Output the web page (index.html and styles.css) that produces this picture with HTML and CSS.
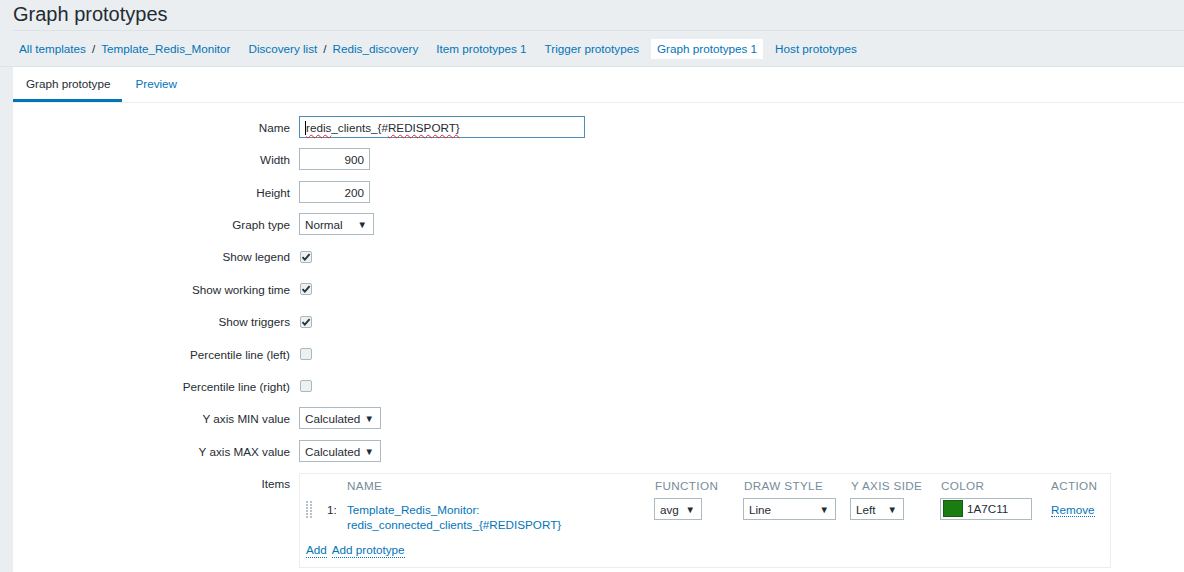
FILE: index.html
```html
<!DOCTYPE html>
<html>
<head>
<meta charset="utf-8">
<title>Graph prototypes</title>
<link rel="stylesheet" href="styles.css">
</head>
<body>
<header class="page-header">
  <h1 class="title">Graph prototypes</h1>
</header>
<nav class="nav">
  <ul class="nav-list">
    <li class="nav-item"><a class="link">All templates</a><span class="sep">/</span><a class="link">Template_Redis_Monitor</a></li>
    <li class="nav-item"><a class="link">Discovery list</a><span class="sep">/</span><a class="link">Redis_discovery</a></li>
    <li class="nav-item"><a class="link">Item prototypes 1</a></li>
    <li class="nav-item"><a class="link">Trigger prototypes</a></li>
    <li class="nav-item active"><a class="link">Graph prototypes 1</a></li>
    <li class="nav-item"><a class="link">Host prototypes</a></li>
  </ul>
</nav>
<main class="panel">
  <ul class="tabs">
    <li class="tab selected">Graph prototype</li>
    <li class="tab">Preview</li>
  </ul>
  <div class="form">
    <div class="label">Name</div>
    <div class="field"><div class="input name-input"><span class="caret"></span><span class="spell">redis</span>_clients_{#<span class="spell">REDISPORT}</span></div></div>

    <div class="label">Width</div>
    <div class="field"><div class="input num-input">900</div></div>

    <div class="label">Height</div>
    <div class="field"><div class="input num-input">200</div></div>

    <div class="label">Graph type</div>
    <div class="field"><div class="select w-type"><span>Normal</span><span class="arrow">▼</span></div></div>

    <div class="label">Show legend</div>
    <div class="field"><span class="checkbox checked"><svg width="10" height="10" viewBox="0 0 10 10"><path d="M1.5 5.2 L3.8 7.6 L8.6 2.2" fill="none" stroke="#2b3236" stroke-width="1.9"/></svg></span></div>

    <div class="label">Show working time</div>
    <div class="field"><span class="checkbox checked"><svg width="10" height="10" viewBox="0 0 10 10"><path d="M1.5 5.2 L3.8 7.6 L8.6 2.2" fill="none" stroke="#2b3236" stroke-width="1.9"/></svg></span></div>

    <div class="label">Show triggers</div>
    <div class="field"><span class="checkbox checked"><svg width="10" height="10" viewBox="0 0 10 10"><path d="M1.5 5.2 L3.8 7.6 L8.6 2.2" fill="none" stroke="#2b3236" stroke-width="1.9"/></svg></span></div>

    <div class="label">Percentile line (left)</div>
    <div class="field"><span class="checkbox"></span></div>

    <div class="label">Percentile line (right)</div>
    <div class="field"><span class="checkbox"></span></div>

    <div class="label">Y axis MIN value</div>
    <div class="field"><div class="select w-axis"><span>Calculated</span><span class="arrow">▼</span></div></div>

    <div class="label">Y axis MAX value</div>
    <div class="field"><div class="select w-axis"><span>Calculated</span><span class="arrow">▼</span></div></div>

    <div class="label">Items</div>
    <div class="field">
      <div class="items-box">
        <div class="items-grid">
          <div class="th"></div>
          <div class="th"></div>
          <div class="th">NAME</div>
          <div class="th">FUNCTION</div>
          <div class="th">DRAW STYLE</div>
          <div class="th">Y AXIS SIDE</div>
          <div class="th">COLOR</div>
          <div class="th">ACTION</div>

          <div class="td handle"><svg width="6" height="18" viewBox="0 0 6 18"><g fill="#b7c3ca"><rect x="0" y="0" width="2" height="2"/><rect x="4" y="0" width="2" height="2"/><rect x="0" y="3" width="2" height="2"/><rect x="4" y="3" width="2" height="2"/><rect x="0" y="6" width="2" height="2"/><rect x="4" y="6" width="2" height="2"/><rect x="0" y="9" width="2" height="2"/><rect x="4" y="9" width="2" height="2"/><rect x="0" y="12" width="2" height="2"/><rect x="4" y="12" width="2" height="2"/><rect x="0" y="15" width="2" height="2"/><rect x="4" y="15" width="2" height="2"/></g></svg></div>
          <div class="td text">1:</div>
          <div class="td text"><a class="link">Template_Redis_Monitor:<br>redis_connected_clients_{#REDISPORT}</a></div>
          <div class="td"><div class="select w-func"><span>avg</span><span class="arrow">▼</span></div></div>
          <div class="td"><div class="select w-draw"><span>Line</span><span class="arrow">▼</span></div></div>
          <div class="td"><div class="select w-side"><span>Left</span><span class="arrow">▼</span></div></div>
          <div class="td"><div class="input color-input"><span class="swatch"></span><span>1A7C11</span></div></div>
          <div class="td text"><a class="link dotted">Remove</a></div>
        </div>
        <div class="items-actions">
          <a class="link dotted">Add</a>
          <a class="link dotted">Add prototype</a>
        </div>
      </div>
    </div>
  </div>
</main>
</body>
</html>
```

FILE: styles.css
```css
* { box-sizing: border-box; }

html, body {
  margin: 0;
  padding: 0;
  background: #ebeef0;
  color: #1f2c33;
  font-family: "Liberation Sans", Arial, sans-serif;
  font-size: 11.7px;
  overflow: hidden;
}

.page-header {
  margin-left: 13px;
  height: 31px;
  padding-top: 2px;
  border-bottom: 1px solid #dde2e5;
}

.title {
  margin: 0;
  font-size: 20px;
  font-weight: normal;
  line-height: 24px;
  color: #1f2c33;
}

.nav {
  height: 36px;
  padding: 8px 13px 7px 13px;
  border-bottom: 1px solid #dde2e5;
}

.nav-list {
  list-style: none;
  margin: 0;
  padding: 0;
  display: flex;
  gap: 6px;
}

.nav-item {
  height: 20px;
  line-height: 20px;
  padding: 0 6px;
}

.nav-item.active {
  background: #ffffff;
}

.link {
  color: #0275b8;
  text-decoration: none;
}

.sep {
  margin: 0 6px;
  color: #1f2c33;
}

.panel {
  margin-left: 13px;
  background: #ffffff;
  height: 600px;
}

.tabs {
  list-style: none;
  margin: 0;
  padding: 0;
  display: flex;
  border-bottom: 1px solid #ebeef0;
}

.tab {
  height: 35px;
  line-height: 34px;
  padding: 0 13px 0 13px;
  color: #0275b8;
  border-bottom: 3px solid transparent;
}

.tab.selected {
  color: #1f2c33;
  border-bottom-color: #0275b8;
  padding: 0 12px 0 13px;
}

.form {
  display: grid;
  grid-template-columns: 277px 1fr;
  column-gap: 9px;
  row-gap: 9.36px;
  padding-top: 13px;
}

.label {
  text-align: right;
  line-height: 22px;
  padding-top: 1px;
  white-space: nowrap;
}

.field {
  display: flex;
  align-items: flex-start;
  min-height: 22px;
}

.input {
  height: 22px;
  border: 1px solid #acbbc2;
  background: #fff;
  line-height: 18px;
  padding: 2px 5px 0 5px;
  color: #1f2c33;
}

.name-input {
  width: 286px;
  border-color: #4c8fba;
  display: flex;
  align-items: center;
  padding-left: 5px;
}

.caret {
  display: inline-block;
  width: 1px;
  height: 14px;
  background: #000;
}

.spell {
  text-decoration: underline wavy #e0282a;
  text-decoration-thickness: 1px;
  text-underline-offset: 2px;
}

.num-input {
  width: 71px;
  text-align: right;
}

.select {
  display: flex;
  justify-content: space-between;
  align-items: center;
  height: 22px;
  border: 1px solid #acbbc2;
  background: #fff;
  padding: 1px 6px 0 5px;
  color: #1f2c33;
}

.arrow {
  font-size: 9.5px;
  color: #1f2c33;
}

.w-type { width: 75px; }
.w-axis { width: 82px; }
.w-func { width: 48px; }
.w-draw { width: 93px; }
.w-side { width: 54px; }

.checkbox {
  display: flex;
  align-items: center;
  justify-content: center;
  width: 12px;
  height: 12px;
  margin: 5.5px 0 0 1px;
  border: 1px solid #aab7bf;
  border-radius: 2px;
  background: #eef1f2;
}

.items-box {
  width: 812px;
  margin-top: 1px;
  border: 1px solid #ebeef0;
  padding: 0 5px 9px 5px;
}

.items-grid {
  display: grid;
  grid-template-columns: 22px 20px 308px 89px 107px 90px 110px 1fr;
  grid-template-rows: 24px auto;
}

.th {
  line-height: 24px;
  color: #768d99;
  letter-spacing: 0.35px;
  white-space: nowrap;
}

.td {
  min-height: 22px;
}

.td.text {
  padding-top: 4px;
  line-height: 15px;
}

.td.handle {
  padding: 3px 0 0 1px;
}

.td .select, .td .color-input {
  margin-left: -1px;
}

.color-input {
  width: 92px;
  display: flex;
  align-items: center;
  padding: 0 2px;
  gap: 4px;
}

.swatch {
  display: inline-block;
  width: 20px;
  height: 17px;
  background: #1a7c11;
  border: 1px solid #145e0d;
}

.dotted {
  border-bottom: 1px dotted #0275b8;
}

.items-actions {
  display: flex;
  gap: 5px;
  margin-top: 10px;
  line-height: 15px;
  padding-left: 1px;
}
```
